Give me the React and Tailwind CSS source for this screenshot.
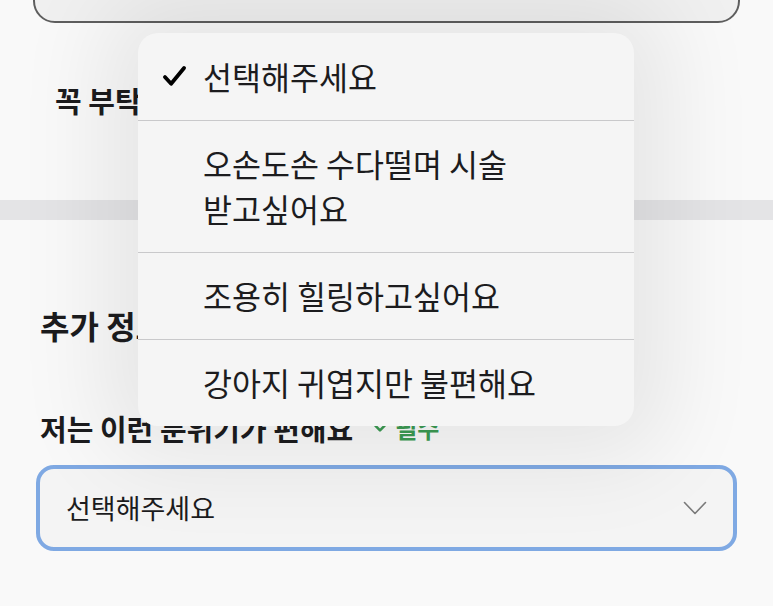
const options = [
  { label: '선택해주세요', checked: true },
  { label: '오손도손 수다떨며 시술 받고싶어요' },
  { label: '조용히 힐링하고싶어요' },
  { label: '강아지 귀엽지만 불편해요' },
];

function Check({ className }) {
  return (
    <svg viewBox="0 0 24 24" className={className} fill="none" stroke="currentColor" strokeWidth="3.4" strokeLinecap="round" strokeLinejoin="round">
      <path d="M3.5 12.5l5.5 6L20.5 4.5" />
    </svg>
  );
}

export default function App() {
  return (
    <div
      className="relative h-[606px] w-full overflow-hidden bg-[#f9f9f9] text-[#1c1c1e]"
      style={{ fontFamily: '"Noto Sans CJK KR", "Noto Sans", sans-serif' }}
    >
      <div className="mx-[33px] mt-[-37px] h-[60px] rounded-[22px] border-2 border-[#5e5e5e] bg-[#f0f0f0]" />

      <p className="mt-[59px] pl-[55px] text-[29px] font-semibold leading-[36px]">꼭 부탁드리고 싶어요</p>

      <div className="mt-[82px] h-[20px] bg-[#e4e4e6]" />

      <h2 className="mt-[85px] px-[40px] text-[32px] font-bold leading-[40px]">추가 정보</h2>

      <div className="mt-[65px] flex items-center gap-[20px] px-[40px] leading-[36px]">
        <span className="text-[29px] font-semibold">저는 이런 분위기가 편해요</span>
        <span className="flex items-center gap-[8px] text-[24px] font-semibold text-[#3b9a52]">
          <svg viewBox="0 0 24 24" className="h-[14px] w-[14px]" fill="none" stroke="currentColor" strokeWidth="4.5" strokeLinecap="round" strokeLinejoin="round">
            <path d="M4 8l8 8 8-8" />
          </svg>
          필수
        </span>
      </div>

      <div className="mx-[36px] mt-[19px] flex h-[86px] items-center justify-between rounded-[18px] border-4 border-[#7fa9e3] bg-[#f4f4f4] pl-[26px] pr-[26px]">
        <span className="text-[27px] leading-[34px]">선택해주세요</span>
        <svg viewBox="0 0 24 16" className="h-[16px] w-[24px]" fill="none" stroke="#7a7a7a" strokeWidth="1.6" strokeLinecap="round" strokeLinejoin="round">
          <path d="M1.5 2.5l10.5 11 10.5-11" />
        </svg>
      </div>

      <div className="absolute left-[138px] top-[33px] w-[496px] overflow-hidden rounded-[20px] bg-[#f5f5f5] shadow-[0_0_90px_35px_rgba(0,0,0,0.08)]">
        {options.map((o, i) => (
          <div
            key={o.label}
            className={`relative break-keep pl-[65px] pr-[30px] text-[31.5px] leading-[45px] ${i > 0 ? 'border-t border-[#c9c9cb] pt-[20px] pb-[21px]' : 'py-[21px]'}`}
          >
            {o.checked && <Check className="absolute left-[23px] top-[30px] h-[27px] w-[27px] text-black" />}
            {o.label}
          </div>
        ))}
      </div>
    </div>
  );
}
